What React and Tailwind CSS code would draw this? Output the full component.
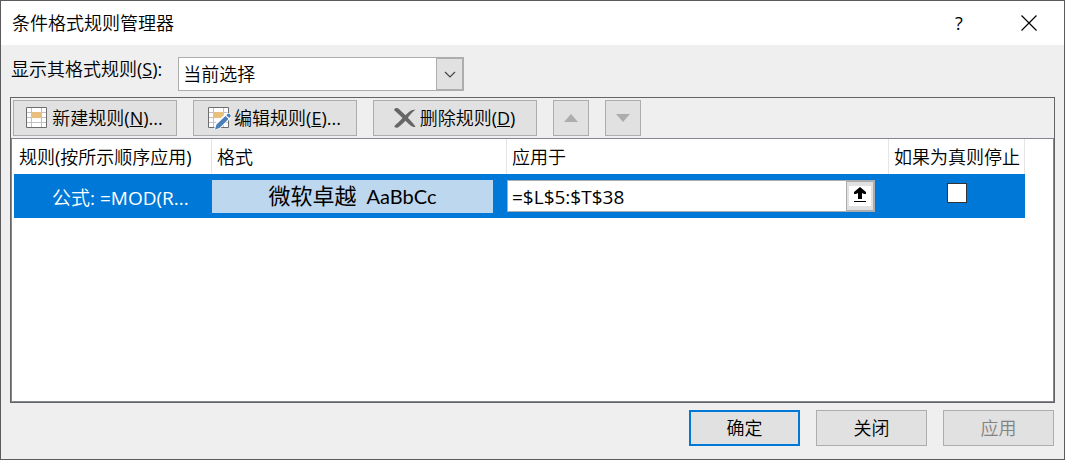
import React, { useState } from 'react';

const buttonBase = 'h-9 border border-[#adadad] bg-[#e1e1e1] text-lg leading-6';
const toolButton = 'w-[164px] pr-0.5 flex items-center justify-center gap-[3px]';

const GridIcon = ({ withPen }) => (
  <svg width="24" height="24" viewBox="0 0 24 24" className="shrink-0" aria-hidden="true">
    <path d="M1 1h21v21H1z" fill="#fff" />
    <path d="M6.500 2v19M16.500 2v19M2 6.500h19M2 11.500h19M2 16.500h19" stroke="#c0c0c0" fill="none" />
    <path d="M1.500 1.500h20v20h-20z" stroke="#6d6d6d" fill="none" />
    <rect x="6" y="6" width="11" height="6" fill="#e8bf7c" />
    {withPen && (
      <>
        <path d="M7 23.500l1.500-6.500L19.500 6.500l4 1v5L12.500 23z" fill="#fff" />
        <path d="M8 23.500l1.500-5 9-8.500 3 3-9 9zM19.300 9.200l1.500-1.500c1-.8 3.500 1.500 2.700 2.700l-1.300 1.600z" fill="#4a7fba" />
      </>
    )}
  </svg>
);

const DeleteIcon = () => (
  <svg width="24" height="24" viewBox="0 0 24 24" className="shrink-0" aria-hidden="true">
    <path
      d="M1 4C2 1.500 4.500 1.500 6 3c2 1.800 4 4 6.500 6.200C15 6.500 18.500 3.500 22.500 3.500c-2.500 2-5.500 5-7.700 8.300 2.700 2.600 5.500 5.500 7.700 9-2.500 1.200-6-2-10-6-3.200 3-5.500 5.500-7.500 6.700-2 .6-4-.3-3.500-1.500 1.800-2 5.500-5 8-8C6.500 9 3.500 6 1 4z"
      fill="#666"
    />
  </svg>
);

const App = () => {
  const [scope, setScope] = useState('selection');
  const [range, setRange] = useState('=$L$5:$T$38');
  const [stopIfTrue, setStopIfTrue] = useState(false);

  return (
    <div className="min-h-screen flex flex-col border border-[#5b5b5f] bg-[#efefef] text-black text-lg leading-6 font-['Open_Sans','Noto_Sans_CJK_SC_DemiLight','Noto_Sans_CJK_SC',sans-serif]">
      {/* Title bar */}
      <header className="flex items-center h-11 pl-[11px] pr-[13px] bg-white">
        <h1 className="flex-1">条件格式规则管理器</h1>
        <button type="button" aria-label="帮助" className="w-11 h-9 flex items-center justify-center mr-[26px]">
          ?
        </button>
        <button type="button" aria-label="关闭窗口" className="w-11 h-9 flex items-center justify-center">
          <svg width="16" height="16" viewBox="0 0 16 16" aria-hidden="true">
            <path d="M.5.5l15 15M15.500.5l-15 15" stroke="#000" strokeWidth="1.2" />
          </svg>
        </button>
      </header>

      <main className="flex-1 flex flex-col px-[9px] pt-3 pb-[13px]">
        {/* Which rules to show */}
        <div className="flex items-start gap-4 pl-px mb-1.5">
          <label htmlFor="scope">
            显示其格式规则(<u>S</u>):
          </label>
          <div className="relative w-[286px]">
            <select
              id="scope"
              value={scope}
              onChange={(e) => setScope(e.target.value)}
              className="appearance-none block w-full h-[34px] pl-1 pr-8 border border-[#adadad] bg-white"
            >
              <option value="selection">当前选择</option>
              <option value="sheet">当前工作表</option>
            </select>
            <span className="pointer-events-none absolute top-px bottom-px right-px w-[27px] border border-[#adadad] bg-[#e1e1e1] flex items-center justify-center">
              <svg width="12" height="7" viewBox="0 0 12 7" aria-hidden="true">
                <path d="M1 1l5 5 5-5" stroke="#444" strokeWidth="1.2" fill="none" />
              </svg>
            </span>
          </div>
        </div>

        <section className="flex-1 flex flex-col border border-[#646464]">
          {/* Toolbar */}
          <div className="flex gap-4 px-0.5 py-0.5">
            <button type="button" className={`${buttonBase} ${toolButton}`}>
              <GridIcon />
              <span>新建规则(<u>N</u>)...</span>
            </button>
            <button type="button" className={`${buttonBase} ${toolButton}`}>
              <GridIcon withPen />
              <span>编辑规则(<u>E</u>)...</span>
            </button>
            <button type="button" className={`${buttonBase} ${toolButton}`}>
              <DeleteIcon />
              <span>删除规则(<u>D</u>)</span>
            </button>
            <button type="button" disabled aria-label="上移" className={`${buttonBase} w-9 flex items-center justify-center`}>
              <svg width="14" height="8" viewBox="0 0 14 8" aria-hidden="true">
                <path d="M7 0l7 8H0z" fill="#adadb0" />
              </svg>
            </button>
            <button type="button" disabled aria-label="下移" className={`${buttonBase} w-9 flex items-center justify-center`}>
              <svg width="14" height="8" viewBox="0 0 14 8" aria-hidden="true">
                <path d="M7 8l7-8H0z" fill="#adadb0" />
              </svg>
            </button>
          </div>

          {/* Rule list */}
          <div className="flex-1 border border-[#828790] bg-white pl-0.5 pr-7">
            <table className="w-full table-fixed border-separate border-spacing-0">
              <colgroup>
                <col className="w-[198px]" />
                <col className="w-[295px]" />
                <col />
                <col className="w-[136px]" />
              </colgroup>
              <thead>
                <tr className="h-[35px] text-left whitespace-nowrap">
                  <th className="p-0 pl-[5px] font-normal border-r border-[#e5e5e5]">规则(按所示顺序应用)</th>
                  <th className="p-0 pl-[5px] font-normal border-r border-[#e5e5e5]">格式</th>
                  <th className="p-0 pl-[5px] font-normal border-r border-[#e5e5e5]">应用于</th>
                  <th className="p-0 pl-[5px] font-normal border-r border-[#e5e5e5]">如果为真则停止</th>
                </tr>
              </thead>
              <tbody>
                <tr className="h-11 bg-[#0078d7]">
                  <td className="p-0 pl-[38px] pt-1 text-[19px] text-white whitespace-nowrap">公式: =MOD(R...</td>
                  <td className="p-0 pr-3.5">
                    <div className="h-[33px] flex items-center justify-center gap-2.5 bg-[#bdd7ee] font-['Lato','Noto_Sans_CJK_SC',sans-serif]">
                      <span className="text-[22px]">微软卓越</span>
                      <span className="text-xl">AaBbCc</span>
                    </div>
                  </td>
                  <td className="p-0 pr-3.5">
                    <div className="flex h-8 border border-[#adadad] bg-white">
                      <input
                        type="text"
                        aria-label="应用于"
                        value={range}
                        onChange={(e) => setRange(e.target.value)}
                        className="flex-1 min-w-0 pl-1 pt-0.5 text-[19px] outline-none"
                      />
                      <button type="button" aria-label="折叠对话框" className="w-7 border border-[#adadad] bg-[#e1e1e1] flex items-center justify-center">
                        <svg width="22" height="20" viewBox="0 0 22 20" aria-hidden="true">
                          <path d="M0 0h22v20H0z" fill="#fff" />
                          <path d="M11 1l6 5v2h-2l-2-1v6H9V7L7 8H5V6zM5 15h12v1H5z" fill="#000" />
                        </svg>
                      </button>
                    </div>
                  </td>
                  <td className="p-0">
                    <input
                      type="checkbox"
                      aria-label="如果为真则停止"
                      checked={stopIfTrue}
                      onChange={(e) => setStopIfTrue(e.target.checked)}
                      className="appearance-none block size-5 mx-auto mb-1.5 border border-[#333] bg-white checked:bg-[#333]"
                    />
                  </td>
                </tr>
              </tbody>
            </table>
          </div>
        </section>

        {/* Dialog actions */}
        <div className="flex justify-end gap-4 mt-[7px] pr-px">
          <button type="button" className="h-9 w-[111px] border-2 border-[#0078d7] bg-[#e1e1e1]">确定</button>
          <button type="button" className={`${buttonBase} w-[111px]`}>关闭</button>
          <button type="button" disabled className={`${buttonBase} w-[111px] text-[#838383]`}>应用</button>
        </div>
      </main>
    </div>
  );
};

export default App;
